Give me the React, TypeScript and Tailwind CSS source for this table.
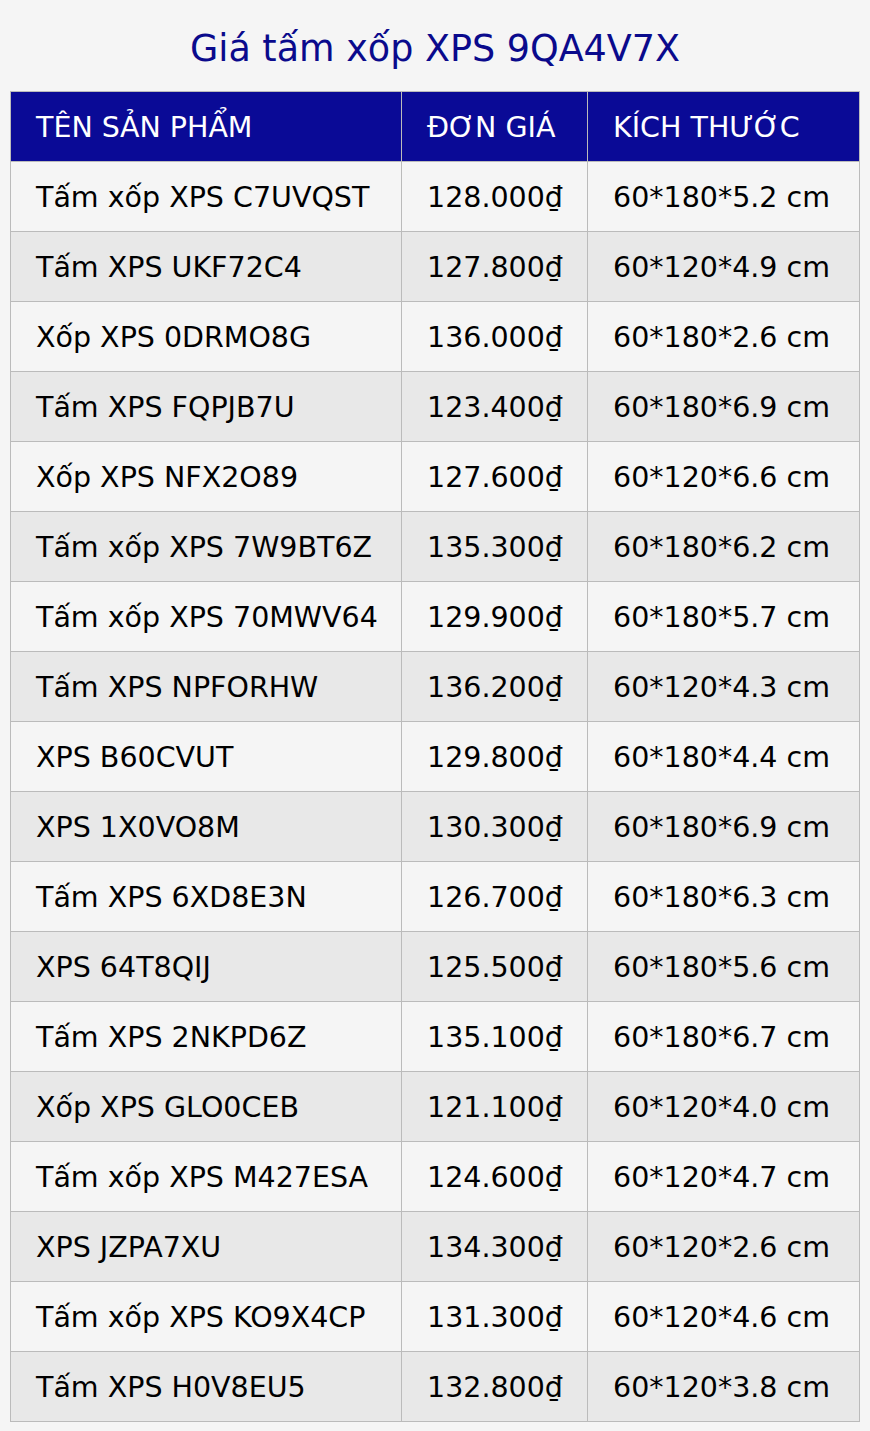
const rows: [string, string, string][] = [
  ['Tấm xốp XPS C7UVQST', '128.000₫', '60*180*5.2 cm'],
  ['Tấm XPS UKF72C4', '127.800₫', '60*120*4.9 cm'],
  ['Xốp XPS 0DRMO8G', '136.000₫', '60*180*2.6 cm'],
  ['Tấm XPS FQPJB7U', '123.400₫', '60*180*6.9 cm'],
  ['Xốp XPS NFX2O89', '127.600₫', '60*120*6.6 cm'],
  ['Tấm xốp XPS 7W9BT6Z', '135.300₫', '60*180*6.2 cm'],
  ['Tấm xốp XPS 70MWV64', '129.900₫', '60*180*5.7 cm'],
  ['Tấm XPS NPFORHW', '136.200₫', '60*120*4.3 cm'],
  ['XPS B60CVUT', '129.800₫', '60*180*4.4 cm'],
  ['XPS 1X0VO8M', '130.300₫', '60*180*6.9 cm'],
  ['Tấm XPS 6XD8E3N', '126.700₫', '60*180*6.3 cm'],
  ['XPS 64T8QIJ', '125.500₫', '60*180*5.6 cm'],
  ['Tấm XPS 2NKPD6Z', '135.100₫', '60*180*6.7 cm'],
  ['Xốp XPS GLO0CEB', '121.100₫', '60*120*4.0 cm'],
  ['Tấm xốp XPS M427ESA', '124.600₫', '60*120*4.7 cm'],
  ['XPS JZPA7XU', '134.300₫', '60*120*2.6 cm'],
  ['Tấm xốp XPS KO9X4CP', '131.300₫', '60*120*4.6 cm'],
  ['Tấm XPS H0V8EU5', '132.800₫', '60*120*3.8 cm'],
]

const cell = 'h-[70px] whitespace-nowrap border border-[#bbbbbb] pl-[25px] pr-0 pt-[2px] text-left'

export default function App() {
  return (
    <div className="min-h-[1431px] bg-[#f5f5f5] px-[10px] pt-[25px] font-['DejaVu_Sans',sans-serif]">
      <h1 className="text-center text-[36.5px] leading-[48px] text-[#0a0a8c]">Giá tấm xốp XPS 9QA4V7X</h1>
      <table className="mt-[18px] w-[849px] table-fixed border-collapse text-[28.5px] leading-[32px]">
        <colgroup>
          <col className="w-[391px]" />
          <col className="w-[186px]" />
          <col className="w-[272px]" />
        </colgroup>
        <thead>
          <tr className="bg-[#0a0a96] text-white">
            <th className={cell + ' font-normal'}>TÊN SẢN PHẨM</th>
            <th className={cell + ' font-normal'}>ĐƠN GIÁ</th>
            <th className={cell + ' font-normal'}>KÍCH THƯỚC</th>
          </tr>
        </thead>
        <tbody className="text-black">
          {rows.map((r, i) => (
            <tr key={i} className={i % 2 === 0 ? 'bg-[#f5f5f5]' : 'bg-[#e8e8e8]'}>
              <td className={cell}>{r[0]}</td>
              <td className={cell}>{r[1]}</td>
              <td className={cell}>{r[2]}</td>
            </tr>
          ))}
        </tbody>
      </table>
    </div>
  )
}
